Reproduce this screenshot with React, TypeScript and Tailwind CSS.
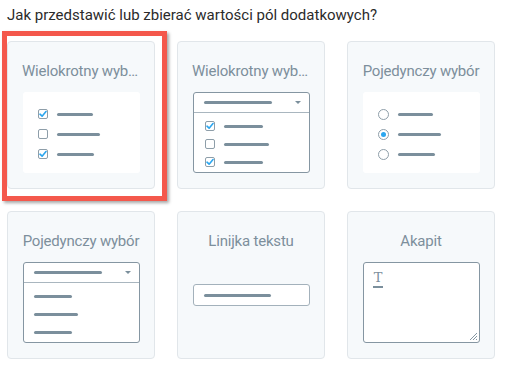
import type { ReactNode } from 'react'

const LINE = 'h-[3px] rounded-full bg-[#7b8f9c]'

function Card({ title, children, selected, narrow }: { title: string; children: ReactNode; selected?: boolean; narrow?: boolean }) {
  return (
    <div className="relative w-[148px] h-[148px] rounded-[4px] border border-[#e1e6ea] bg-[#f6f9fb] flex flex-col items-center pt-[19px]">
      <div className={`w-full ${narrow ? 'pl-[14px] pr-[14px]' : 'px-[12px]'} text-center text-[15px] tracking-[-0.2px] leading-[20px] text-[#7d8f9c] truncate`}>{title}</div>
      <div className="w-full px-[14px] pl-[15px] mt-[11px] flex-1">{children}</div>
      {selected && (
        <div className="absolute left-[-6px] top-[-11px] w-[165px] h-[170px] border-[5px] border-[#f4584c] shadow-[2px_2px_3px_rgba(0,0,0,0.35)] pointer-events-none" />
      )}
    </div>
  )
}

function Check({ checked }: { checked?: boolean }) {
  return (
    <div className="w-[10px] h-[10px] rounded-[2px] border border-[#8e9ea9] bg-white flex items-center justify-center">
      {checked && (
        <svg width="8" height="8" viewBox="0 0 8 8">
          <path d="M1 4.2 L3.1 6.2 L7 1.6" fill="none" stroke="#2ba6ef" strokeWidth="1.6" strokeLinecap="round" strokeLinejoin="round" />
        </svg>
      )}
    </div>
  )
}

function Radio({ checked }: { checked?: boolean }) {
  return (
    <div className="w-[11px] h-[11px] rounded-full border border-[#8e9ea9] bg-white flex items-center justify-center">
      {checked && <div className="w-[5px] h-[5px] rounded-full bg-[#2ba6ef]" />}
    </div>
  )
}

function Row({ mark, w }: { mark?: ReactNode; w: number }) {
  return (
    <div className="flex items-center h-[10px] gap-[9px]">
      {mark}
      <div className={LINE} style={{ width: w }} />
    </div>
  )
}

function DropHeader() {
  return (
    <div className="h-[20px] border-b border-[#a9b6bf] flex items-center justify-between pl-[10px] pr-[8px]">
      <div className={LINE} style={{ width: 68 }} />
      <div className="w-0 h-0 border-l-[3px] border-r-[3px] border-t-[3px] border-l-transparent border-r-transparent border-t-[#7b8f9c]" />
    </div>
  )
}

export default function App() {
  return (
    <div className="w-[510px] h-[386px] bg-white px-[7px] pt-[5px]" style={{ fontFamily: 'Roboto, "Noto Sans", sans-serif' }}>
      <div className="text-[15px] leading-[20px] text-[#2b2b2b]">Jak przedstawić lub zbierać wartości pól dodatkowych?</div>
      <div className="mt-[16px] grid grid-cols-[148px_148px_148px] gap-[22px]">
        <Card title="Wielokrotny wybór" selected narrow>
          <div className="h-[81px] rounded-[3px] bg-white flex flex-col gap-[10px] pt-[17px] pl-[15px]">
            <Row mark={<Check checked />} w={36} />
            <Row mark={<Check />} w={43} />
            <Row mark={<Check checked />} w={37} />
          </div>
        </Card>
        <Card title="Wielokrotny wybór" narrow>
          <div className="h-[81px] rounded-[3px] border border-[#8596a2] bg-white">
            <DropHeader />
            <div className="flex flex-col gap-[8px] pt-[8px] pl-[11px]">
              <Row mark={<Check checked />} w={39} />
              <Row mark={<Check />} w={45} />
              <Row mark={<Check checked />} w={39} />
            </div>
          </div>
        </Card>
        <Card title="Pojedynczy wybór">
          <div className="h-[81px] rounded-[3px] bg-white flex flex-col gap-[10px] pt-[17px] pl-[15px]">
            <Row mark={<Radio />} w={35} />
            <Row mark={<Radio checked />} w={43} />
            <Row mark={<Radio />} w={37} />
          </div>
        </Card>
        <Card title="Pojedynczy wybór">
          <div className="h-[81px] rounded-[3px] border border-[#8596a2] bg-white">
            <DropHeader />
            <div className="flex flex-col gap-[8px] pt-[8px] pl-[10px]">
              <Row w={38} />
              <Row w={44} />
              <Row w={38} />
            </div>
          </div>
        </Card>
        <Card title="Linijka tekstu">
          <div className="mt-[22px] h-[22px] rounded-[3px] border border-[#a3b1bb] bg-white flex items-center pl-[10px]">
            <div className={LINE} style={{ width: 67 }} />
          </div>
        </Card>
        <Card title="Akapit">
          <div className="relative h-[81px] rounded-[3px] border border-[#8596a2] bg-white">
            <div className="absolute left-[9px] top-[9px] flex flex-col items-center">
              <span className="text-[13px] leading-[12px] text-[#7b8f9c]" style={{ fontFamily: '"DejaVu Serif", serif' }}>T</span>
              <div className="mt-[2px] w-[10px] h-[1.5px] bg-[#7b8f9c]" />
            </div>
            <svg className="absolute right-[1px] bottom-[1px]" width="10" height="10" viewBox="0 0 10 10">
              <path d="M9 2 L2 9 M9 5 L5 9 M9 8 L8 9" stroke="#8596a2" strokeWidth="1" />
            </svg>
          </div>
        </Card>
      </div>
    </div>
  )
}
